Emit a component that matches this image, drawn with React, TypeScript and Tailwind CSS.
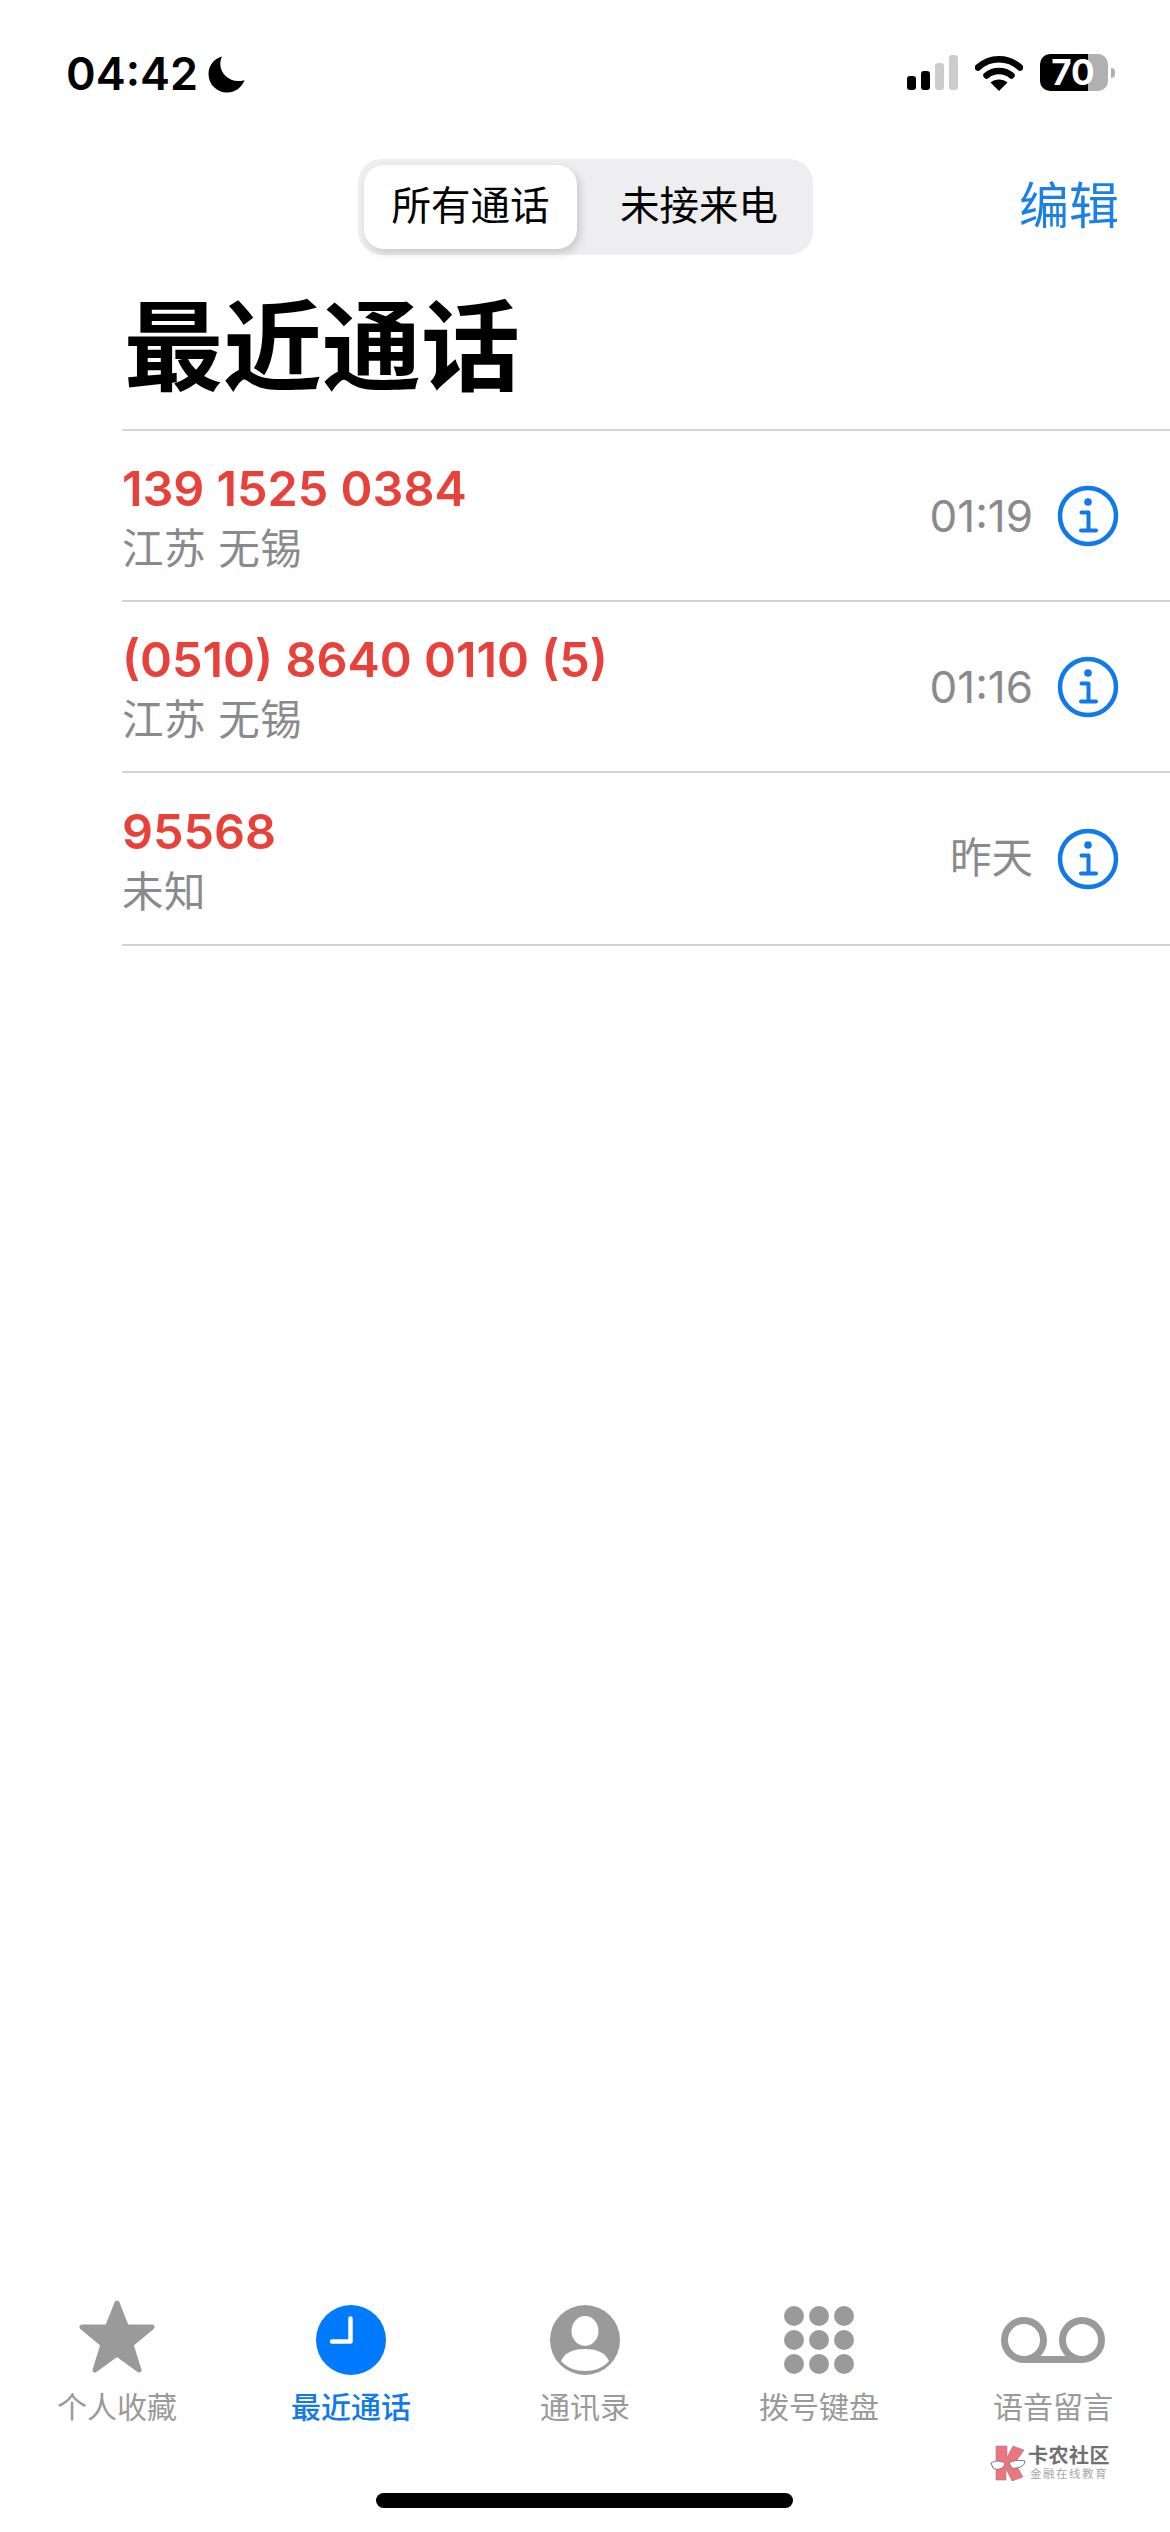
import React from "react";

const CJK = '"Inter","Noto Sans CJK SC",sans-serif';

function Info() {
  return (
    <svg width="62" height="62" viewBox="0 0 62 62" fill="none" className="shrink-0">
      <circle cx="31" cy="31" r="28" stroke="#1179e9" strokeWidth="4.5" />
      <circle cx="31" cy="17" r="3.8" fill="#1179e9" />
      <path d="M24.5 27.5H31.5V45M24 45.5H39" stroke="#1179e9" strokeWidth="4" strokeLinecap="round" strokeLinejoin="round" />
    </svg>
  );
}

function Row({ num, sub, time, h, timeClass }: { num: string; sub: string; time: string; h: string; timeClass: string }) {
  return (
    <div className={`${h} flex items-center border-b-2 border-[#d3d3d5] pr-[51px]`}>
      <div className="flex-1 flex flex-col pt-[7px]">
        <div className="text-[48.5px] leading-[60px] font-semibold text-[#e8413a]">{num}</div>
        <div className="text-[41.5px] leading-[60px] text-[#8a8a8e] tracking-[0.5px]">{sub}</div>
      </div>
      <div className={`${timeClass} text-[#8a8a8e] mr-[24px]`}>{time}</div>
      <Info />
    </div>
  );
}

function Tab({ label, active, children }: { label: string; active?: boolean; children: React.ReactNode }) {
  return (
    <div className="flex flex-col items-center">
      <div className="h-[84px] mb-[6px] flex items-center justify-center">{children}</div>
      <div className={`text-[30px] leading-[38px] ${active ? "text-[#1179e9] font-medium" : "text-[#9a9a9a]"}`}>{label}</div>
    </div>
  );
}

export default function App() {
  return (
    <div className="w-[1170px] h-[2532px] bg-white flex flex-col relative overflow-hidden" style={{ fontFamily: CJK }}>
      {/* status bar */}
      <div className="h-[159px] flex items-start justify-between pl-[66px] pr-[55px] pt-[50px] shrink-0">
        <div className="flex items-center gap-[10px] text-black">
          <span className="text-[45px] leading-[48px] font-semibold">04:42</span>
          <svg width="37" height="37" viewBox="0 0 37 37">
            <path d="M14 0.5C5.8 2.6 0.5 9.8 0.5 18c0 10.3 8.2 18.5 18.5 18.5 8 0 14.800-5 17.500-12.600-2 .9-4 1.200-6.200 1.200C20.500 25.100 12.300 17.200 12.300 8c0-2.700.6-5.200 1.700-7.500z" fill="#000" />
          </svg>
        </div>
        <div className="flex items-center gap-[17px] pt-[4px]">
          <svg width="51" height="35" viewBox="0 0 51 35">
            <rect x="0" y="21" width="9" height="14" rx="3" fill="#000" />
            <rect x="14" y="16" width="9" height="19" rx="3" fill="#000" />
            <rect x="28" y="8" width="9" height="27" rx="3" fill="#cccccc" />
            <rect x="42" y="0" width="9" height="35" rx="3" fill="#cccccc" />
          </svg>
          <svg width="48" height="36" viewBox="0 0 48 36" fill="none">
            <path d="M3 12.500C15 1.500 33 1.500 45 12.500" stroke="#000" strokeWidth="6.500" strokeLinecap="round" />
            <path d="M11.500 20.500C18.500 14.500 29.500 14.500 36.500 20.500" stroke="#000" strokeWidth="6.500" strokeLinecap="round" />
            <path d="M24 36L15.500 27.500C20 23.500 28 23.500 32.500 27.500Z" fill="#000" />
          </svg>
          <div className="flex items-center gap-[3px]">
            <div className="w-[68px] h-[37px] rounded-[10px] bg-[linear-gradient(90deg,#000_0,#000_48px,#b0b0b0_48px)] flex items-center justify-center text-white text-[35px] font-bold leading-none pr-[2px]">
              70
            </div>
            <div className="w-[4px] h-[10px] rounded-r-[4px] bg-[#b0b0b0]" />
          </div>
        </div>
      </div>

      {/* nav */}
      <div className="h-[96px] flex items-center justify-between pl-[358px] pr-[51px] shrink-0">
        <div className="w-[455px] h-[96px] rounded-[24px] bg-[#eeeef0] flex items-center p-[6px] text-[39.5px] text-black">
          <div className="w-[213px] h-[84px] rounded-[20px] bg-white shadow-[3px_4px_8px_rgba(0,0,0,0.16)] flex items-center justify-center">所有通话</div>
          <div className="flex-1 flex items-center justify-center pl-[14px]">未接来电</div>
        </div>
        <div className="text-[50px] leading-none text-[#1a80e8] pb-[2px]">编辑</div>
      </div>

      {/* title */}
      <div className="h-[174px] pl-[124px] pt-[34px] shrink-0">
        <h1 className="text-[99px] leading-[116px] font-bold text-black">最近通话</h1>
      </div>

      {/* list */}
      <div className="ml-[122px] border-t-2 border-[#d3d3d5] shrink-0">
        <Row num="139 1525 0384" sub="江苏 无锡" time="01:19" h="h-[171px]" timeClass="text-[44px]" />
        <Row num="(0510) 8640 0110 (5)" sub="江苏 无锡" time="01:16" h="h-[171px]" timeClass="text-[44px]" />
        <Row num="95568" sub="未知" time="昨天" h="h-[173px]" timeClass="text-[41.5px]" />
      </div>

      <div className="flex-1" />

      {/* tab bar */}
      <div className="grid grid-cols-5 shrink-0">
        <Tab label="个人收藏">
          <svg width="78" height="74" viewBox="0 0 78 74" className="mb-[6px]">
            <path d="M39 3L48.500 27H74L53 44.500L61 70L39 54L17 70L25 44.500L4 27H29.500Z" fill="#9a9a9a" stroke="#9a9a9a" strokeWidth="5" strokeLinejoin="round" />
          </svg>
        </Tab>
        <Tab label="最近通话" active>
          <svg width="70" height="70" viewBox="0 0 70 70" fill="none">
            <circle cx="35" cy="35" r="35" fill="#007aff" />
            <path d="M34.500 13.500V36.500H16" stroke="#fff" strokeWidth="4.500" strokeLinecap="round" strokeLinejoin="round" />
          </svg>
        </Tab>
        <Tab label="通讯录">
          <svg width="70" height="70" viewBox="0 0 70 70">
            <circle cx="35" cy="35" r="35" fill="#9a9a9a" />
            <ellipse cx="35" cy="26" rx="13.500" ry="15" fill="#fff" />
            <path d="M11 56C15 47 24 44 35 44C46 44 55 47 59 56C53 63 44 66 35 66C26 66 17 63 11 56Z" fill="#fff" />
          </svg>
        </Tab>
        <Tab label="拨号键盘">
          <div className="grid grid-cols-3 gap-x-[5px] gap-y-[4px]">
            {[0, 1, 2, 3, 4, 5, 6, 7, 8].map((i) => (
              <div key={i} className="w-[20px] h-[20px] rounded-full bg-[#9a9a9a]" />
            ))}
          </div>
        </Tab>
        <Tab label="语音留言">
          <svg width="104" height="46" viewBox="0 0 104 46" fill="none">
            <circle cx="23" cy="23" r="19.500" stroke="#9a9a9a" strokeWidth="7" />
            <circle cx="81" cy="23" r="19.500" stroke="#9a9a9a" strokeWidth="7" />
            <path d="M23 42.500H81" stroke="#9a9a9a" strokeWidth="7" />
          </svg>
        </Tab>
      </div>

      {/* home indicator */}
      <div className="h-[106px] flex items-end justify-center pb-[24px] pr-[2px] shrink-0">
        <div className="w-[417px] h-[15px] rounded-full bg-black" />
      </div>

      {/* watermark */}
      <div className="absolute left-[990px] top-[2445px] flex items-center gap-[2px]">
        <svg width="36" height="36" viewBox="0 0 36 36">
          <path d="M6 1H17V12L23 1L34 5L25 18L33 32L22 36L16 24V35H6Z" fill="#ee7480" stroke="#8a8a8a" strokeWidth="0.600" />
          <path d="M1 18C6 15 11 16 15 18C15 24 6 26 3 23ZM19 18C23 15 30 15 35 16C35 22 26 24 22 23Z" fill="#fff" stroke="#777" strokeWidth="1" />
        </svg>
        <div className="flex flex-col">
          <div className="text-[20px] leading-[22px] font-bold text-[#707070] tracking-[0.5px]">卡农社区</div>
          <div className="text-[11.500px] leading-[14px] text-[#a8a8a8] tracking-[1.500px] pl-[2px]">金融在线教育</div>
        </div>
      </div>
    </div>
  );
}
